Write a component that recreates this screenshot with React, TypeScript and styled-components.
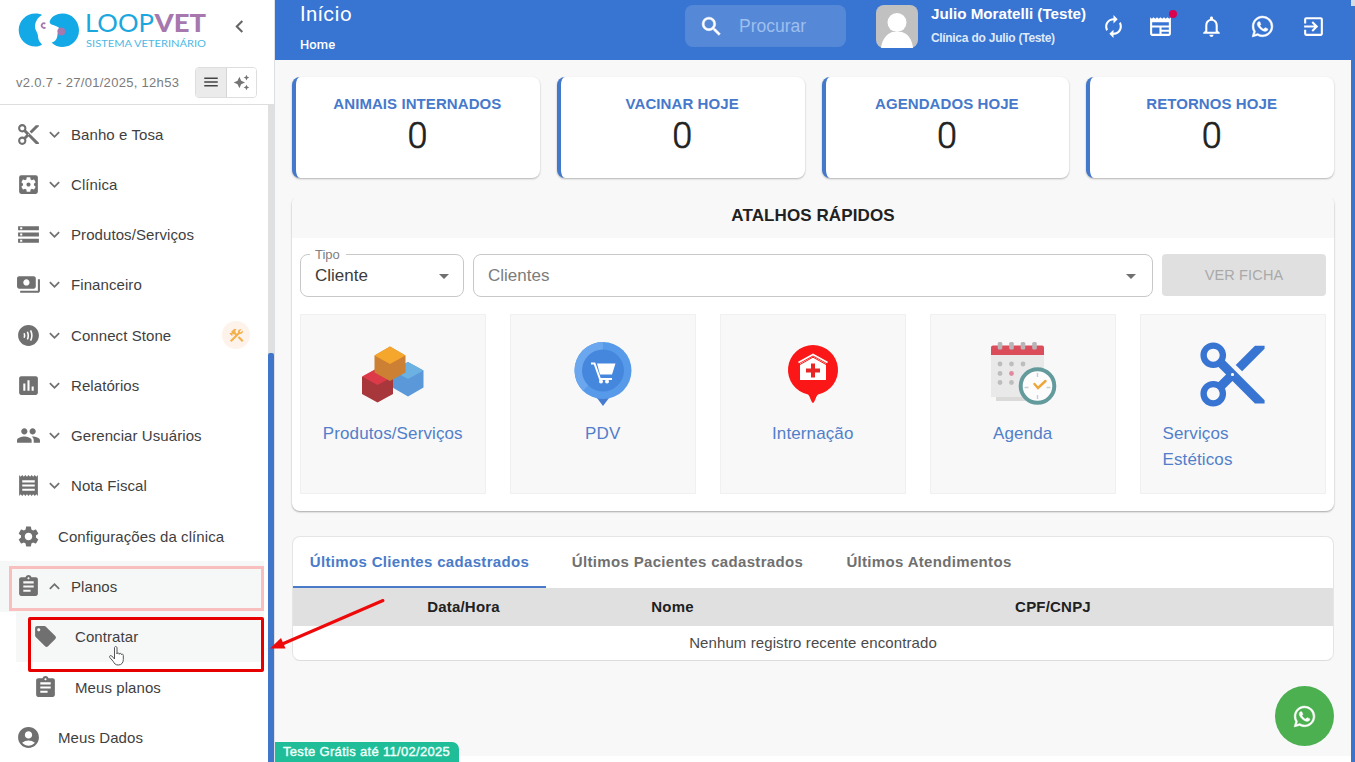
import React from 'react';
import styled, { createGlobalStyle } from 'styled-components';
import type { IconType } from 'react-icons';
import {
  MdContentCut, MdSettingsApplications, MdStorage, MdPayments, MdContactless, MdAssessment, MdPeople,
  MdReceipt, MdSettings, MdAssignment, MdLocalOffer, MdAccountCircle, MdMenu, MdAutoAwesome, MdExpandMore,
  MdExpandLess, MdConstruction, MdSearch, MdAutorenew, MdNewspaper, MdNotificationsNone, MdWhatsapp,
  MdExitToApp, MdArrowDropDown, MdKeyboardArrowLeft,
} from 'react-icons/md';

const blue = '#3874d2';

const GlobalStyle = createGlobalStyle`
  * { box-sizing: border-box; }
  body { margin: 0; overflow: hidden; font-family: "Liberation Sans", Arial, sans-serif; color: #212121; }
  svg { display: block; flex: none; }
`;

const Page = styled.div`
  position: relative;
  display: flex;
  width: 1355px;
  height: 762px;
  overflow: hidden;
  background: #fff;
`;

/* Sidebar */
const Sidebar = styled.aside`
  display: flex;
  flex-direction: column;
  width: 275px;
  height: 762px;
  border-right: 1px solid #dcdfe3;
  background: #fff;
`;
const SideHeader = styled.div`
  flex: none;
  height: 105px;
  border-bottom: 1px solid #dedede;
`;
const Brand = styled.div`
  display: flex;
  align-items: center;
  height: 60px;
  padding-left: 18px;
`;
const CollapseButton = styled.button`
  display: flex;
  margin: -8px 0 0 19px;
  padding: 0;
  border: 0;
  background: none;
  color: #666;
`;
const VersionBar = styled.div`
  display: flex;
  align-items: center;
  justify-content: space-between;
  height: 44px;
  padding: 0 17px 0 16px;
`;
const Version = styled.span`
  font-size: 13px;
  letter-spacing: 0.3px;
  color: #7b7b7b;
  white-space: nowrap;
`;
const Toggle = styled.div`
  display: flex;
  width: 62px;
  height: 31px;
  border: 1px solid #dedede;
  border-radius: 4px;
  overflow: hidden;
`;
const ToggleItem = styled.span<{ $on?: boolean }>`
  display: flex;
  flex: 1;
  align-items: center;
  justify-content: center;
  background: ${p => (p.$on ? '#ebebeb' : '#fff')};
  border-right: ${p => (p.$on ? '1px solid #d5d5d5' : '0')};
  color: ${p => (p.$on ? '#444' : '#757575')};
`;
const SideBody = styled.div`
  display: flex;
  flex: 1;
  min-height: 0;
`;
const Nav = styled.nav`
  flex: 1;
  padding-top: 4px;
  overflow: hidden;
`;
const Track = styled.div`
  width: 6px;
  background: #e0e0e0;
  padding-top: 248px;
`;
const Thumb = styled.div`
  height: 420px;
  background: #4076ca;
  border-radius: 2px 2px 0 0;
`;
const NavRow = styled.div<{ $level?: number; $active?: boolean }>`
  display: flex;
  align-items: center;
  height: 50.28px;
  margin: 0 4px 0 ${p => (p.$level ? 16 : 0)}px;
  padding-left: ${p => (p.$level ? 17 : 16)}px;
  background: ${p => (p.$active ? '#f6f7f7' : 'transparent')};
  color: #707070;
`;
const NavText = styled.span<{ $gap: number }>`
  margin-left: ${p => p.$gap}px;
  font-size: 15px;
  letter-spacing: 0.08px;
  color: #3f3f3f;
  white-space: nowrap;
`;
const Chevron = styled.span`
  display: flex;
  margin-left: 3px;
`;
const BetaBadge = styled.span`
  display: flex;
  align-items: center;
  justify-content: center;
  width: 28px;
  height: 28px;
  margin-left: auto;
  margin-right: 14px;
  border-radius: 50%;
  background: #fdf3ea;
  color: #f3b04b;
`;

/* Main column */
const Main = styled.main`
  display: flex;
  flex-direction: column;
  width: 1076px;
  height: 762px;
`;
const TopBar = styled.header`
  display: flex;
  flex: none;
  height: 60px;
  background: ${blue};
  color: #fff;
`;
const Titles = styled.div`
  width: 410px;
  padding-left: 25px;
`;
const Title = styled.div`
  height: 28px;
  font: 20.5px/28px Roboto, sans-serif;
  letter-spacing: 0.45px;
`;
const Crumb = styled.div`
  margin-top: 9px;
  font: 500 13px/16px Roboto, sans-serif;
  letter-spacing: 0.1px;
`;
const SearchBox = styled.div`
  display: flex;
  align-items: center;
  width: 161px;
  height: 42px;
  margin-top: 5px;
  padding-left: 14px;
  border-radius: 8px;
  background: #5589d8;
  path:not([fill='none']) { stroke: currentColor; stroke-width: 0.5px; }
`;
const SearchHint = styled.span`
  margin-left: 15px;
  font-size: 17.5px;
  color: #9fbfee;
`;
const Avatar = styled.svg`
  margin: 5px 0 0 30px;
`;
const UserInfo = styled.div`
  width: 157px;
  margin-left: 13px;
  white-space: nowrap;
`;
const UserName = styled.div`
  margin-top: 4px;
  font: bold 15.2px/20px "Liberation Sans", sans-serif;
`;
const ClinicName = styled.div`
  margin-top: 7px;
  font: bold 12px/14px "Liberation Sans", sans-serif;
  letter-spacing: -0.6px;
  word-spacing: 0.4px;
  letter-spacing: -0.33px;
  color: #dfe9f8;
`;
const Actions = styled.div`
  display: flex;
  align-items: center;
  gap: 25px;
  height: 52px;
  margin-left: 12px;
`;
const Action = styled.span`
  position: relative;
  display: flex;
  width: 26px;
  justify-content: center;
  &:first-child { margin-right: -4px; }
`;
const Dot = styled.i`
  position: absolute;
  top: -4px;
  right: -4px;
  width: 8px;
  height: 8px;
  border-radius: 50%;
  background: #dc0050;
`;
const Content = styled.div`
  height: 696px;
  padding: 17px 17px 0;
  background: #f8f8f8;
`;
const Stats = styled.div`
  display: grid;
  grid-template-columns: repeat(4, 1fr);
  gap: 17px;
`;
const StatCard = styled.div`
  height: 101px;
  padding: 17px 1px 0 0;
  border-left: 4px solid #4478ca;
  border-radius: 8px;
  background: #fff;
  box-shadow: 0 1px 2px rgba(0, 0, 0, 0.28);
  text-align: center;
`;
const StatLabel = styled.div`
  font: bold 15px/20px "Liberation Sans", sans-serif;
  letter-spacing: 0.08px;
  color: #4679cb;
`;
const StatValue = styled.div`
  font: 300 36px/45px Roboto, sans-serif;
  -webkit-text-stroke: 0.7px #212121;
`;
const PanelWrap = styled.div`
  clip-path: inset(2px -4px -4px -4px);
`;
const Panel = styled.section`
  height: 315px;
  margin-top: 18px;
  border-radius: 8px;
  background: #fff;
  box-shadow: 0 1px 2px rgba(0, 0, 0, 0.33);
  overflow: hidden;
`;
const PanelTitle = styled.h2`
  margin: 0;
  height: 42px;
  padding-top: 8px;
  background: #f8f8f8;
  font: bold 17px/23px "Liberation Sans", sans-serif;
  letter-spacing: 0.1px;
  text-align: center;
`;
const Filters = styled.div`
  display: grid;
  grid-template-columns: 164px 680px 164px;
  gap: 9px;
  padding: 16px 8px 0;
`;
const Select = styled.div<{ $empty?: boolean }>`
  position: relative;
  display: flex;
  align-items: center;
  justify-content: space-between;
  height: 43px;
  padding: 0 ${p => (p.$empty ? 9 : 7)}px 0 14px;
  border: 1px solid #c8c8c8;
  border-radius: 8px;
  font-size: 17px;
  letter-spacing: 0;
  color: ${p => (p.$empty ? '#7c7c7c' : '#3b3b3b')};
  svg { color: #707070; }
`;
const FloatLabel = styled.span`
  position: absolute;
  top: -8px;
  left: 9px;
  padding: 0 6px 0 5px;
  background: #fff;
  font-size: 13px;
  line-height: 15px;
  color: #808080;
`;
const RecordButton = styled.button`
  height: 42px;
  padding: 0;
  border: 0;
  border-radius: 4px;
  background: #e0e0e0;
  font: 14.5px "Liberation Sans", sans-serif;
  letter-spacing: 0.15px;
  color: #a9a9a9;
`;
const Tiles = styled.div`
  display: grid;
  grid-template-columns: repeat(5, 185.5px);
  gap: 24.5px;
  padding: 17px 8px 0;
`;
const Tile = styled.div`
  display: flex;
  flex-direction: column;
  align-items: center;
  height: 180px;
  padding: 25px 21.5px 0;
  border: 1px solid #f0f0f0;
  background: #f8f8f8;
`;
const TileLabel = styled.span`
  margin-top: 13px;
  font-size: 17px;
  line-height: 25.5px;
  letter-spacing: 0.12px;
  color: #527fca;
`;
const TableCard = styled.section`
  height: 125px;
  margin-top: 25px;
  border: 1px solid #e5e5e5;
  border-bottom-color: #dcdcdc;
  border-radius: 8px;
  background: #fff;
  overflow: hidden;
`;
const Tabs = styled.div`
  display: flex;
  height: 51px;
`;
const Tab = styled.span<{ $on?: boolean; $width: number }>`
  width: ${p => p.$width}px;
  border-bottom: 2px solid ${p => (p.$on ? '#4a7bc9' : 'transparent')};
  font: bold 15px/50px "Liberation Sans", sans-serif;
  letter-spacing: 0.33px;
  text-align: center;
  white-space: nowrap;
  color: ${p => (p.$on ? '#4a7bc9' : '#707070')};
`;
const TableHead = styled.div`
  display: grid;
  grid-template-columns: 87px 167px 251px 510px 1fr;
  height: 38px;
  background: #e0e0e0;
  font: bold 15px/37px "Liberation Sans", sans-serif;
  letter-spacing: 0.2px;
  text-align: center;
`;
const EmptyRow = styled.div`
  font-size: 15px;
  line-height: 34px;
  letter-spacing: 0.1px;
  text-align: center;
  color: #4a4a4a;
`;
const PageScroll = styled.div`
  width: 4px;
  height: 762px;
  padding-top: 6px;
  background: #d9dce2;
`;
const PageThumb = styled.div`
  height: 756px;
  background: #3b73cd;
`;

/* Floating items */
const TrialTag = styled.div`
  position: absolute;
  left: 275px;
  bottom: 0;
  width: 184px;
  height: 20px;
  padding-left: 8px;
  border-radius: 0 7px 0 0;
  background: #1fbd98;
  font: 13px/20px "Liberation Sans", sans-serif;
  letter-spacing: 0.31px;
  -webkit-text-stroke: 0.4px #f0fffa;
  white-space: nowrap;
  color: #f0fffa;
`;
const ChatButton = styled.button`
  position: absolute;
  left: 1275px;
  top: 686px;
  display: flex;
  align-items: center;
  justify-content: center;
  width: 59px;
  height: 60px;
  padding: 0;
  border: 0;
  border-radius: 50%;
  background: #4caf50;
  color: #fff;
`;
const ChatGlyph = styled(MdWhatsapp)`
  path:not([fill='none']) { stroke: currentColor; stroke-width: 0.5px; }
`;
const Highlight = styled.div<{ $soft?: boolean }>`
  position: absolute;
  left: ${p => (p.$soft ? 9 : 28)}px;
  top: ${p => (p.$soft ? 566 : 617)}px;
  width: ${p => (p.$soft ? 255 : 236)}px;
  height: ${p => (p.$soft ? 45 : 55)}px;
  border: 3px solid ${p => (p.$soft ? '#f9bfbf' : '#e60000')};
  border-radius: ${p => (p.$soft ? 0 : 2)}px;
`;
const Pointer = styled.svg`
  position: absolute;
  left: 108px;
  top: 645px;
`;
const Arrow = styled.svg`
  position: absolute;
  left: 268px;
  top: 595px;
`;

const Logo = () => (
  <svg width="190" height="44" viewBox="0 0 190 44">
    <path d="M17.500 5.500c3 0 5 .5 6.500 1.500-4 2-7 7-7 11.500 0 4 3 6 3 10 0 3 2 6 4 8-2 1.500-4 2-6.500 2C8 38.500.7 31 .7 22S8 5.500 17.500 5.500z" fill="#12a9e6" />
    <path d="M27.300 15.700a2.300 2.300 0 1 0 .2 3.600" fill="none" stroke="#a678ad" strokeWidth="1.700" />
    <path d="M35 8.500c3-2 6-3 9.500-3C54 5.500 61 13 61 22.300S54 39 44.500 39c-4 0-8-1.500-11-4.500 3-.5 6-3 6-8.500l3-5c-2-2.500-6-3.500-9-4.500-3-1.500-2-4.500 1.500-8z" fill="#12a9e6" />
    <circle cx="43.300" cy="23.500" r="3.900" fill="#a678ad" />
    <text x="67" y="24" fontFamily="Lato, sans-serif" fontWeight="400" fontSize="24.500" fill="#1ba7dd" textLength="69" lengthAdjust="spacingAndGlyphs">LOOP</text>
    <text x="136.500" y="24" fontFamily="Lato, sans-serif" fontWeight="900" fontSize="24.500" fill="#a678ad" textLength="51.500" lengthAdjust="spacingAndGlyphs">VET</text>
    <text x="68" y="39" fontFamily="Lato, sans-serif" fontSize="10.200" fill="#4db9e4" textLength="120" lengthAdjust="spacingAndGlyphs">SISTEMA VETERINÁRIO</text>
  </svg>
);

const BoxesArt = () => (
  <svg width="68" height="68" viewBox="0 0 68 68">
    <path d="M49 22l15.500 8.500v17L49 56.500l-15.500-9v-17z" fill="#5b98d9" />
    <path d="M49 22l15.500 8.500L49 39l-15.500-8.500z" fill="#6bb1e2" />
    <path d="M18.500 29L34 37v17l-15.500 8.500L3 54V37z" fill="#a8373c" />
    <path d="M18.500 28L34 36.500 18.500 45 3 36.500z" fill="#dc3a48" />
    <path d="M31 6.500l15.500 9v17L31 41l-15.500-8.500v-17z" fill="#cc8033" />
    <path d="M31 6.500l15.500 9L31 24l-15.500-8.500z" fill="#f5a62c" />
  </svg>
);

const CartPinArt = () => (
  <svg width="68" height="68" viewBox="0 0 68 68">
    <path d="M25 54h18l-9 12z" fill="#467bd0" />
    <circle cx="34" cy="30.500" r="28.500" fill="#569ae9" />
    <path d="M34 2a28.500 28.500 0 0 0-20 48.700L34 30z" fill="#6ba7ee" />
    <circle cx="34" cy="30.500" r="21" fill="#4687de" />
    <path d="M22 23.500h3.500L31 39h12" fill="none" stroke="#fff" strokeWidth="2" />
    <path d="M28 23.500h18.500L43 34.500H31z" fill="#fff" />
    <circle cx="32" cy="41.500" r="2" fill="#fff" /><circle cx="38" cy="41.500" r="2" fill="#fff" />
  </svg>
);

const ClinicPinArt = () => (
  <svg width="68" height="68" viewBox="0 0 68 68">
    <path d="M34 5a25 25 0 0 1 5 49.500C37 56 36 62 34 63c-2-1-3-7-5-8.500A25 25 0 0 1 34 5z" fill="#fb1717" />
    <path d="M34 16.500l13 7V40H21V23.500z" fill="#fff" />
    <path d="M19.500 22.500L34 14.500l14.500 8" fill="none" stroke="#fff" strokeWidth="1.800" />
    <path d="M21 24.500l13-7.300 13 7.300" fill="none" stroke="#fb1717" strokeWidth="1" />
    <path d="M34 23.500v14M27 30.500h14" stroke="#e72626" strokeWidth="4" />
  </svg>
);

const CalendarArt = () => (
  <svg width="68" height="68" viewBox="0 0 68 68">
    <path d="M7 48h50v13H7z" fill="#dadad9" />
    <path d="M2 10h53v47H2z" fill="#e9e9e9" />
    <path d="M4 5.500h49a2 2 0 0 1 2 2V15H2V7.500a2 2 0 0 1 2-2z" fill="#dc4d5c" />
    {[11, 22.5, 34, 45.5].map(x => <rect key={x} x={x - 2.3} y="2" width="4.600" height="7.500" rx="1.500" fill="#b9b5b6" />)}
    {[24, 33.5, 42.5].flatMap((y, r) => [11, 22.5, 34].slice(0, r ? 2 : 3).map((x, c) => (
      <circle key={`${x}-${y}`} cx={x} cy={y} r="2.400" fill={r === 1 && c === 1 ? '#e18a9d' : '#bdbdbd'} />
    )))}
    <circle cx="48.500" cy="46" r="16.800" fill="#fcfcfd" stroke="#639b9d" strokeWidth="4" />
    <path d="M48.500 33v4M48.500 55v4M35.500 47.500h4M57.500 47.500h4" stroke="#c7cdd0" strokeWidth="1.400" />
    <path d="M45.500 44l3.500 4 7.500-7" fill="none" stroke="#eda63a" strokeWidth="2.400" strokeLinecap="round" />
  </svg>
);

const ScissorsBox = styled.span`
  display: flex;
  width: 68px;
  height: 68px;
  align-items: center;
  justify-content: center;
  color: ${blue};
`;

interface NavItem {
  label: string;
  icon: IconType;
  group?: 'open' | 'closed';
  child?: boolean;
  active?: boolean;
  badge?: boolean;
}

const navItems: NavItem[] = [
  { label: 'Banho e Tosa', icon: MdContentCut, group: 'closed' },
  { label: 'Clínica', icon: MdSettingsApplications, group: 'closed' },
  { label: 'Produtos/Serviços', icon: MdStorage, group: 'closed' },
  { label: 'Financeiro', icon: MdPayments, group: 'closed' },
  { label: 'Connect Stone', icon: MdContactless, group: 'closed', badge: true },
  { label: 'Relatórios', icon: MdAssessment, group: 'closed' },
  { label: 'Gerenciar Usuários', icon: MdPeople, group: 'closed' },
  { label: 'Nota Fiscal', icon: MdReceipt, group: 'closed' },
  { label: 'Configurações da clínica', icon: MdSettings },
  { label: 'Planos', icon: MdAssignment, group: 'open', active: true },
  { label: 'Contratar', icon: MdLocalOffer, child: true, active: true },
  { label: 'Meus planos', icon: MdAssignment, child: true },
  { label: 'Meus Dados', icon: MdAccountCircle },
];

const stats = ['ANIMAIS INTERNADOS', 'VACINAR HOJE', 'AGENDADOS HOJE', 'RETORNOS HOJE'];

const shortcuts: { label: React.ReactNode; art: React.ReactNode }[] = [
  { label: 'Produtos/Serviços', art: <BoxesArt /> },
  { label: 'PDV', art: <CartPinArt /> },
  { label: 'Internação', art: <ClinicPinArt /> },
  { label: 'Agenda', art: <CalendarArt /> },
  { label: 'Serviços Estéticos', art: <ScissorsBox><MdContentCut size={77} /></ScissorsBox> },
];

/* A label of two words takes the full width of its tile and breaks after the first. */
const WideLabel = styled(TileLabel)`
  align-self: stretch;
  padding-right: 30px;
`;

export default function App() {
  return (
    <>
      <GlobalStyle />
      <Page>
        <Sidebar>
          <SideHeader>
            <Brand>
              <Logo />
              <CollapseButton aria-label="Recolher menu"><MdKeyboardArrowLeft size={25} /></CollapseButton>
            </Brand>
            <VersionBar>
              <Version>v2.0.7 - 27/01/2025, 12h53</Version>
              <Toggle>
                <ToggleItem $on><MdMenu size={18} /></ToggleItem>
                <ToggleItem><MdAutoAwesome size={17} /></ToggleItem>
              </Toggle>
            </VersionBar>
          </SideHeader>
          <SideBody>
            <Nav>
              {navItems.map(({ label, icon: Icon, group, child, active, badge }) => (
                <NavRow key={label} $level={child ? 1 : 0} $active={active}>
                  <Icon size={25} />
                  {group && <Chevron>{group === 'open' ? <MdExpandLess size={21} /> : <MdExpandMore size={21} />}</Chevron>}
                  <NavText $gap={group ? 6 : 17}>{label}</NavText>
                  {badge && <BetaBadge><MdConstruction size={17} /></BetaBadge>}
                </NavRow>
              ))}
            </Nav>
            <Track><Thumb /></Track>
          </SideBody>
        </Sidebar>

        <Main>
          <TopBar>
            <Titles>
              <Title>Início</Title>
              <Crumb>Home</Crumb>
            </Titles>
            <SearchBox>
              <MdSearch size={25} />
              <SearchHint>Procurar</SearchHint>
            </SearchBox>
            <Avatar width="42" height="43" viewBox="0 0 42 43">
              <rect width="42" height="43" rx="8" fill="#c1c1c1" />
              <circle cx="21" cy="17.500" r="9.500" fill="#fff" />
              <path d="M5 43c1-9 6-14 11-16h10c6 2 10 7 11 16z" fill="#fff" />
            </Avatar>
            <UserInfo>
              <UserName>Julio Moratelli (Teste)</UserName>
              <ClinicName>Clínica do Julio (Teste)</ClinicName>
            </UserInfo>
            <Actions>
              <Action><MdAutorenew size={25} /></Action>
              <Action><MdNewspaper size={25} /><Dot /></Action>
              <Action><MdNotificationsNone size={25} /></Action>
              <Action><ChatGlyph size={25} /></Action>
              <Action><MdExitToApp size={25} /></Action>
            </Actions>
          </TopBar>
          <Content>
            <Stats>
              {stats.map(label => (
                <StatCard key={label}>
                  <StatLabel>{label}</StatLabel>
                  <StatValue>0</StatValue>
                </StatCard>
              ))}
            </Stats>
            <PanelWrap>
              <Panel>
                <PanelTitle>ATALHOS RÁPIDOS</PanelTitle>
                <Filters>
                  <Select><FloatLabel>Tipo</FloatLabel>Cliente<MdArrowDropDown size={24} /></Select>
                  <Select $empty>Clientes<MdArrowDropDown size={24} /></Select>
                  <RecordButton disabled>VER FICHA</RecordButton>
                </Filters>
                <Tiles>
                  {shortcuts.map(({ label, art }) => {
                    const Label = String(label).includes(' ') ? WideLabel : TileLabel;
                    return (
                      <Tile key={String(label)}>
                        {art}
                        <Label>{label}</Label>
                      </Tile>
                    );
                  })}
                </Tiles>
              </Panel>
            </PanelWrap>
            <TableCard>
              <Tabs>
                <Tab $on $width={253}>Últimos Clientes cadastrados</Tab>
                <Tab $width={283}>Últimos Pacientes cadastrados</Tab>
                <Tab $width={200}>Últimos Atendimentos</Tab>
              </Tabs>
              <TableHead>
                <span />
                <span>Data/Hora</span>
                <span>Nome</span>
                <span>CPF/CNPJ</span>
              </TableHead>
              <EmptyRow>Nenhum registro recente encontrado</EmptyRow>
            </TableCard>
          </Content>
        </Main>
        <PageScroll><PageThumb /></PageScroll>

        <TrialTag>Teste Grátis até 11/02/2025</TrialTag>
        <ChatButton aria-label="WhatsApp"><ChatGlyph size={25} /></ChatButton>
        <Highlight $soft />
        <Highlight />
        <Pointer width="18" height="21" viewBox="0 0 18 21">
          <path d="M6.500 14V3c0-2 2.500-2 2.500 0v6c0-1.500 2.300-1.500 2.300.3 0-1.500 2.200-1.200 2.200.4 0-1 1.800-.8 1.800.8v4c0 3-1.500 5.500-5 5.500-3 0-4-1.500-5-3.500l-3.500-4c-1-1.500.7-2.500 2-1.500z" fill="#fff" stroke="#555" strokeWidth="1" />
        </Pointer>
        <Arrow width="120" height="60" viewBox="0 0 120 60">
          <path d="M115 5.500L12 50" stroke="#ee0a0a" strokeWidth="3" strokeLinecap="round" />
          <path d="M2 53.500L13 43l4.500 10.500z" fill="#ee0a0a" />
        </Arrow>
      </Page>
    </>
  );
}
